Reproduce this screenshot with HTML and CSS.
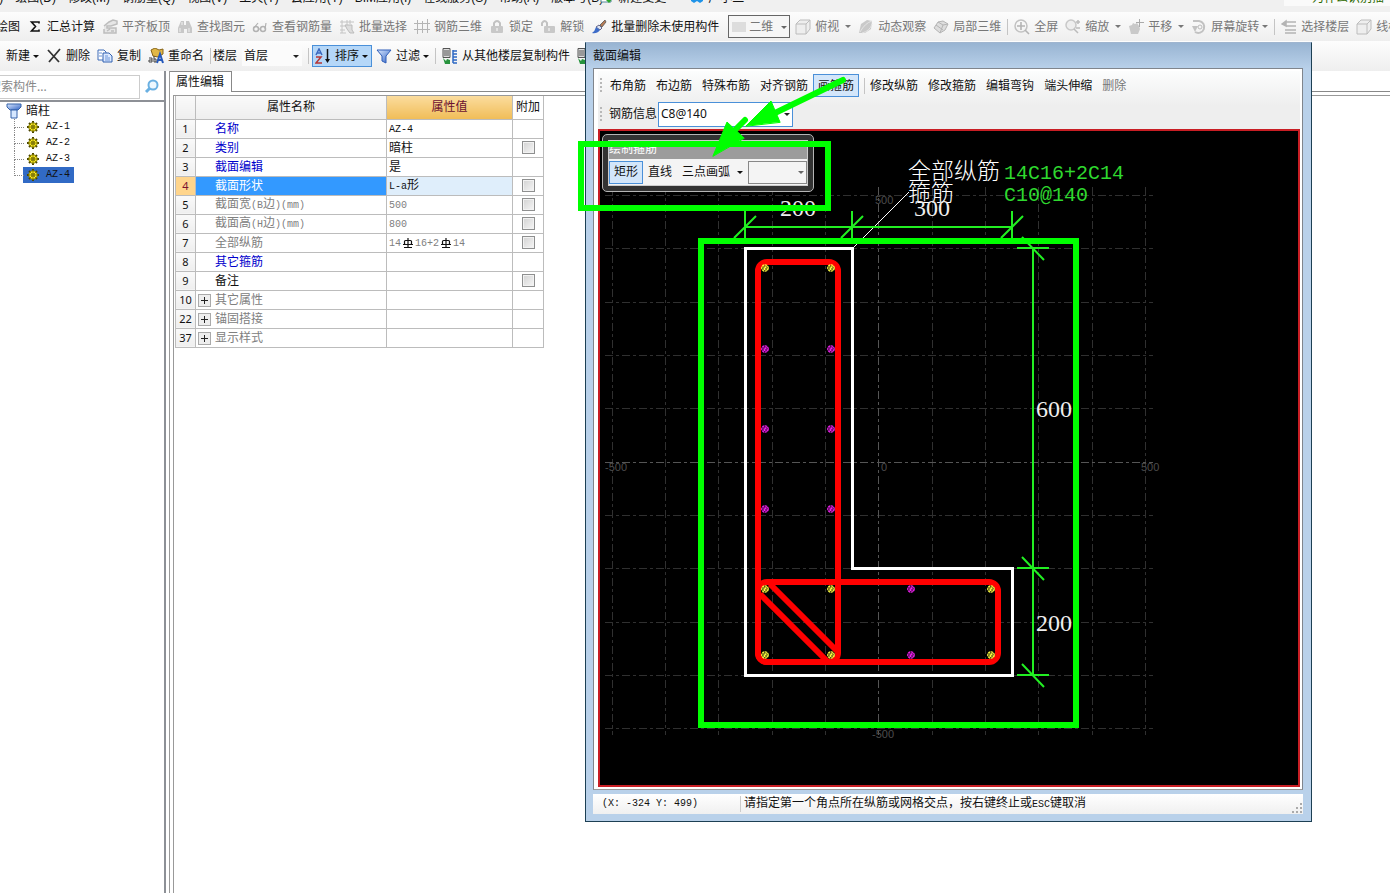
FILE: index.html
```html
<!DOCTYPE html>
<html lang="zh-CN">
<head>
<meta charset="utf-8">
<title>截面编辑</title>
<link rel="stylesheet" href="styles.css">
</head>
<body>
<svg class="defs" aria-hidden="true">
  <defs>
    <linearGradient id="blueFill" x1="0" y1="0" x2="1" y2="1"><stop offset="0" stop-color="#dbe9ff"/><stop offset="1" stop-color="#2f62c4"/></linearGradient>
    <symbol id="i-sigma" viewBox="0 0 16 16"><path d="M12 4.500V3H4.500l4 4.500-4 4.500H12v-1.500" fill="none" stroke="#111" stroke-width="1.600"/></symbol>
    <symbol id="i-align" viewBox="0 0 16 16"><path d="M2 7l5-4 4-2 4 1v3l-6 2H5v2h9v5H2v-4M5 12l3-2M9 12h3" fill="#e6e6e6" stroke="#bdbdbd" stroke-width="1.500"/></symbol>
    <symbol id="i-find" viewBox="0 0 16 16"><path d="M4 2h3v4h2V2h3l3 7v5h-5v-4H7v4H1V9z" fill="#c8c8c8"/><path d="M3 9v4M12 9v4M5 3v3" stroke="#f2f2f2"/></symbol>
    <symbol id="i-glasses" viewBox="0 0 16 16"><circle cx="4" cy="10" r="2.500" fill="none" stroke="#b2b2b2" stroke-width="1.500"/><circle cx="11" cy="10" r="2.500" fill="none" stroke="#b2b2b2" stroke-width="1.500"/><path d="M2 9l4-5M13 10l1-6M6 10h3" fill="none" stroke="#b2b2b2" stroke-width="1.200"/></symbol>
    <symbol id="i-batch" viewBox="0 0 16 16"><path d="M1 3h14M1 7h7M1 11h5M1 14h6M3 1v13M8 1v5M11 1v4" stroke="#c4c4c4" fill="none"/><path d="M6 6h7v5l2 3h-4l-3-4z" fill="#ddd" stroke="#bbb"/></symbol>
    <symbol id="i-rebar" viewBox="0 0 16 16"><path d="M0 4.500h16M0 10.500h16M3.500 1v14M8.500 2v12M13.500 0v14" stroke="#b4b4b4" fill="none"/></symbol>
    <symbol id="i-lock" viewBox="0 0 16 16"><path d="M5 7V4q3-4 6 0v3" fill="none" stroke="#c2c2c2" stroke-width="2"/><rect x="2" y="7" width="12" height="7" rx="1" fill="#c8c8c8"/><path d="M8 9v3" stroke="#fff"/></symbol>
    <symbol id="i-unlock" viewBox="0 0 16 16"><path d="M2 7V4q3-4 5 0v3" fill="none" stroke="#c2c2c2" stroke-width="2"/><rect x="4" y="7" width="11" height="7" rx="1" fill="#c8c8c8"/><path d="M9 9v3" stroke="#fff"/></symbol>
    <symbol id="i-brush" viewBox="0 0 16 16"><path d="M9 6l5-5 1 2-4 5z" fill="#b77b55" stroke="#555" stroke-width=".8"/><path d="M8 6l3 3-2 2-4-3z" fill="#dce5f4" stroke="#668"/><path d="M5 8l4 3q-3 4-8 3 3-2 4-6z" fill="#3d6cc8"/></symbol>
    <symbol id="i-cube" viewBox="0 0 16 16"><path d="M1 5l4-4h10v9l-4 5H1z" fill="#eee" stroke="#bcbcbc"/><path d="M1 5h10v10M11 5l4-4" fill="none" stroke="#bcbcbc"/></symbol>
    <symbol id="i-orbit" viewBox="0 0 16 16"><path d="M1 14L3 5l6-4 5 1-1 8-6 4z" fill="#c9c9c9"/><path d="M2 13Q7 4 14 2M4 14q8-2 10-9" fill="none" stroke="#e4e4e4"/></symbol>
    <symbol id="i-local" viewBox="0 0 16 16"><path d="M1 9l4-6 5-1 5 3-3 6-5 3z" fill="#ddd" stroke="#b4b4b4"/><path d="M5 3l5 3 5-1M10 6l-3 8M3 6l7 5" fill="none" stroke="#b4b4b4"/></symbol>
    <symbol id="i-full" viewBox="0 0 16 16"><circle cx="7" cy="7" r="6" fill="none" stroke="#c2c2c2" stroke-width="1.500"/><path d="M3 7h8M7 3v8M11 11l4 4" stroke="#b4b4b4" stroke-width="1.600"/></symbol>
    <symbol id="i-zoom" viewBox="0 0 16 16"><circle cx="6" cy="6" r="5" fill="#eee" stroke="#c8c8c8" stroke-width="1.500"/><path d="M9 10l4 4M13 1v4M11 3h4M11 9h4" stroke="#bbb" stroke-width="1.500"/></symbol>
    <symbol id="i-pan" viewBox="0 0 16 16"><path d="M1 7l3-1 1-2 2 1 2-1 2 3 1 3-2 5H3z" fill="#c9c9c9"/><path d="M11.500 0v8M8 3.500h8" stroke="#aaa"/></symbol>
    <symbol id="i-rotate" viewBox="0 0 16 16"><path d="M2 2h6a6 6 0 1 1-4 11" fill="none" stroke="#c2c2c2" stroke-width="2"/><path d="M1 7h6l-3 6z" fill="#c2c2c2"/><circle cx="9" cy="8" r="2" fill="none" stroke="#bbb"/></symbol>
    <symbol id="i-floors" viewBox="0 0 16 16"><path d="M4 3h11M4 7h11M4 11h11M4 14h11M1 5l4-3v5z" stroke="#b4b4b4" stroke-width="1.500" fill="#b4b4b4"/></symbol>
    <symbol id="i-x" viewBox="0 0 16 16"><path d="M2 2l11 12M14 1L3 14" stroke="#333" stroke-width="1.800" fill="none"/></symbol>
    <symbol id="i-copy" viewBox="0 0 16 16"><path d="M1 2h6l2 2v8H1z" fill="#fff" stroke="#3e6cb8"/><path d="M6 5h6l3 3v6H6z" fill="#dce9ff" stroke="#3160b0"/><path d="M2 5h3M2 8h3M8 8h3M8 10h5M8 12h5" stroke="#6b94d8"/></symbol>
    <symbol id="i-rename" viewBox="0 0 16 16"><path d="M3 2l4-2 4 2 4-1v5l-5 3-5-1z" fill="#e1b746" stroke="#876418"/><path d="M9 15l3-9 3 9M10 12h4" fill="none" stroke="#2458bb" stroke-width="2"/><path d="M1 10h3v4H1v-2h3M6 8v6h2v-3H6" fill="none" stroke="#444"/></symbol>
    <symbol id="i-sort" viewBox="0 0 16 16"><path d="M1 7l3-6 3 6M2 5h4" fill="none" stroke="#3a68bd" stroke-width="1.500"/><path d="M1 9h5l-5 6h6" fill="none" stroke="#b53636" stroke-width="1.500"/><path d="M12.500 1v12" stroke="#111" stroke-width="1.500"/><path d="M10 11h5l-2.500 4z" fill="#111"/></symbol>
    <symbol id="i-filter" viewBox="0 0 16 16"><path d="M1 2h14L10 8v7l-4-2V8z" fill="url(#blueFill)" stroke="#2e5db8"/></symbol>
    <symbol id="i-floorcopy" viewBox="0 0 16 16"><path d="M1 .5h7v9H1z" fill="#ddd" stroke="#555"/><path d="M2 3h5M2 5h5M2 7h5" stroke="#555"/><path d="M11 2v13M11 3h4M11 6h4M11 9h4M11 12h4M11 15h4" stroke="#2d68c4" stroke-width="1.500"/><path d="M1 10l3 3 1-2 3 1v4H3z" fill="#27933d"/></symbol>
    <symbol id="i-search" viewBox="0 0 16 16"><circle cx="9" cy="6" r="4.500" fill="#edf8ff" stroke="#6ab0e2" stroke-width="2"/><path d="M6 9l-4 4" stroke="#6ab0e2" stroke-width="3"/></symbol>
    <symbol id="i-column" viewBox="0 0 16 16"><path d="M1 1h14v3l-3 3H4L1 4z" fill="url(#blueFill)" stroke="#3563aa"/><path d="M5 7h6v8H5z" fill="#d7e8ff" stroke="#3563aa"/></symbol>
    <symbol id="i-gear" viewBox="0 0 12 12"><path d="M6 0v12M0 6h12M2 2l8 8M10 2l-8 8" stroke="#4b4500" stroke-width="2"/><circle cx="6" cy="6" r="4.200" fill="#ffee22" stroke="#7b7300"/><path d="M6 2v8M2 6h8M3 3l6 6M9 3L3 9" stroke="#777000" stroke-width=".8"/><circle cx="6" cy="6" r="1.200" fill="#ffee22" stroke="#4b4500"/></symbol>
    <symbol id="i-rebarC" viewBox="0 0 12 12"><path d="M6 1v10M2 10.500h8M1 7.500h10" stroke="#111" stroke-width="1.200"/><rect x="2.500" y="3.500" width="7" height="4" rx="1" fill="none" stroke="#111" stroke-width="1.200"/></symbol>
    <g id="bar" fill="none" stroke="currentColor"><circle r="3.200" stroke-width="1.300" stroke-dasharray="2.400 .5"/><path d="M-2-1h2v3M1 1h2M-1 2v-2M1-2v2" stroke-width="1.200"/></g>
    <g id="tickV"><path d="M0-16V13M-11 11L11-11"/></g>
    <g id="tickH"><path d="M-16 0H16M-11-11L11 12"/></g>
  </defs>
</svg>

<div class="app">
  <nav class="menubar">
    <span class="menus"><button>(F)</button><button>绘图(D)</button><button>修改(M)</button><button>钢筋量(Q)</button><button>视图(V)</button><button>工具(T)</button><button>云应用(Y)</button><button>BIM应用(I)</button><button>在线服务(S)</button><button>帮助(A)</button><button>版本号(B)</button></span>
    <button class="iconed"><svg width="14" height="14" viewBox="0 0 14 14"><path d="M1 1h10v11H1z" fill="#fff" stroke="#589"/><path d="M5 9l4 4 4-5-3-2z" fill="#2ba52b"/></svg>新建变更</button>
    <button class="iconed user"><svg width="14" height="14" viewBox="0 0 14 14"><path d="M1 3h12v8l-3 2-3-2-3 2-3-2z" fill="#1e93e8"/></svg>广小二</button>
    <span class="notice">为什么识别插</span>
  </nav>

  <div class="toolbar main-tools">
    <button>绘图</button>
    <button><svg><use href="#i-sigma"/></svg>汇总计算</button>
    <button disabled><svg><use href="#i-align"/></svg>平齐板顶</button>
    <button disabled><svg><use href="#i-find"/></svg>查找图元</button>
    <button disabled><svg><use href="#i-glasses"/></svg>查看钢筋量</button>
    <button disabled><svg><use href="#i-batch"/></svg>批量选择</button>
    <button disabled><svg><use href="#i-rebar"/></svg>钢筋三维</button>
    <button disabled><svg><use href="#i-lock"/></svg>锁定</button>
    <button disabled><svg><use href="#i-unlock"/></svg>解锁</button>
    <button><svg><use href="#i-brush"/></svg>批量删除未使用构件</button>
    <span class="pick view-pick"><select aria-label="视图" disabled><option>二维</option></select></span>
    <button disabled><svg><use href="#i-cube"/></svg>俯视<i class="caret"></i></button>
    <button disabled><svg><use href="#i-orbit"/></svg>动态观察</button>
    <button disabled><svg><use href="#i-local"/></svg>局部三维</button>
    <i class="sep"></i>
    <button disabled><svg><use href="#i-full"/></svg>全屏</button>
    <button disabled><svg><use href="#i-zoom"/></svg>缩放<i class="caret"></i></button>
    <button disabled><svg><use href="#i-pan"/></svg>平移<i class="caret"></i></button>
    <button disabled><svg><use href="#i-rotate"/></svg>屏幕旋转<i class="caret tight"></i></button>
    <i class="sep"></i>
    <button disabled><svg><use href="#i-floors"/></svg>选择楼层</button>
    <button disabled><svg><use href="#i-cube"/></svg>线框</button>
  </div>

  <div class="toolbar edit-tools">
    <button>新建<i class="caret tight"></i></button>
    <button><svg><use href="#i-x"/></svg>删除</button>
    <button><svg><use href="#i-copy"/></svg>复制</button>
    <button><svg><use href="#i-rename"/></svg>重命名</button>
    <i class="sep"></i>
    <label for="floor">楼层</label>
    <span class="pick floor-pick"><select id="floor"><option>首层</option></select></span>
    <i class="sep"></i>
    <button class="on"><svg><use href="#i-sort"/></svg>排序<i class="caret tight"></i></button>
    <button><svg><use href="#i-filter"/></svg>过滤<i class="caret tight"></i></button>
    <i class="sep"></i>
    <button><svg><use href="#i-floorcopy"/></svg>从其他楼层复制构件</button>
    <button aria-label="复制到其他楼层"><svg><use href="#i-floorcopy"/></svg></button>
  </div>

  <div class="work">
    <aside class="side">
      <div class="search">
        <input type="text" aria-label="搜索构件" placeholder="搜索构件...">
        <button aria-label="搜索"><svg width="16" height="16"><use href="#i-search"/></svg></button>
      </div>
      <ul class="tree">
        <li class="root"><svg width="16" height="16"><use href="#i-column"/></svg>暗柱
          <ul>
            <li><span><svg width="12" height="12"><use href="#i-gear"/></svg><b>AZ-1</b></span></li>
            <li><span><svg width="12" height="12"><use href="#i-gear"/></svg><b>AZ-2</b></span></li>
            <li><span><svg width="12" height="12"><use href="#i-gear"/></svg><b>AZ-3</b></span></li>
            <li><span class="chosen"><svg width="12" height="12"><use href="#i-gear"/></svg><b>AZ-4</b></span></li>
          </ul>
        </li>
      </ul>
    </aside>
    <section class="props">
      <div class="tabs"><button class="tab">属性编辑</button></div>
      <div class="sheet">
        <table>
          <colgroup><col class="c-no"><col class="c-name"><col class="c-val"><col class="c-add"></colgroup>
          <thead><tr><th></th><th>属性名称</th><th class="hot">属性值</th><th class="plain">附加</th></tr></thead>
          <tbody>
            <tr><th>1</th><td class="name key">名称</td><td><span class="m">AZ-4</span></td><td></td></tr>
            <tr><th>2</th><td class="name key">类别</td><td>暗柱</td><td class="chk"><input type="checkbox" aria-label="附加 类别"></td></tr>
            <tr><th>3</th><td class="name key">截面编辑</td><td>是</td><td></td></tr>
            <tr class="sel"><th>4</th><td class="name">截面形状</td><td><span class="m">L-a</span>形</td><td class="chk"><input type="checkbox" aria-label="附加 截面形状"></td></tr>
            <tr class="dim"><th>5</th><td class="name">截面宽<span class="m">(B</span>边<span class="m">)(mm)</span></td><td><span class="m">500</span></td><td class="chk"><input type="checkbox" aria-label="附加 截面宽"></td></tr>
            <tr class="dim"><th>6</th><td class="name">截面高<span class="m">(H</span>边<span class="m">)(mm)</span></td><td><span class="m">800</span></td><td class="chk"><input type="checkbox" aria-label="附加 截面高"></td></tr>
            <tr class="dim"><th>7</th><td class="name">全部纵筋</td><td><span class="m">14</span><svg class="steel"><use href="#i-rebarC"/></svg><span class="m">16+2</span><svg class="steel"><use href="#i-rebarC"/></svg><span class="m">14</span></td><td class="chk"><input type="checkbox" aria-label="附加 全部纵筋"></td></tr>
            <tr><th>8</th><td class="name key">其它箍筋</td><td></td><td></td></tr>
            <tr><th>9</th><td class="name">备注</td><td></td><td class="chk"><input type="checkbox" aria-label="附加 备注"></td></tr>
            <tr class="dim"><th>10</th><td class="group"><button aria-label="展开 其它属性"></button>其它属性</td><td></td><td></td></tr>
            <tr class="dim"><th>22</th><td class="group"><button aria-label="展开 锚固搭接"></button>锚固搭接</td><td></td><td></td></tr>
            <tr class="dim"><th>37</th><td class="group"><button aria-label="展开 显示样式"></button>显示样式</td><td></td><td></td></tr>
          </tbody>
        </table>
      </div>
    </section>
  </div>
</div>

<section class="window">
  <h1>截面编辑</h1>
  <div class="frame">
    <div class="wtools">
      <div class="row">
        <i class="grip"></i>
        <button>布角筋</button><button>布边筋</button><button>特殊布筋</button><button>对齐钢筋</button><button class="on">画箍筋</button>
        <i class="sep"></i>
        <button>修改纵筋</button><button>修改箍筋</button><button>编辑弯钩</button><button>端头伸缩</button><button disabled>删除</button>
      </div>
      <div class="row">
        <i class="grip"></i>
        <label for="rebar">钢筋信息</label>
        <span class="pick rebar-pick"><select id="rebar"><option>C8@140</option></select></span>
      </div>
    </div>
    <div class="canvas">
      <svg class="drawing" viewBox="600 131 698 654" preserveAspectRatio="xMinYMin meet">
        <g class="grid">
          <path d="M612.500 187V735M665.500 187V735M718.500 187V735M772.500 187V735M825.500 187V735M932.500 187V735M985.500 187V735M1038.500 187V735M1092.500 187V735M1145.500 187V735"/>
          <path d="M605 195.500H1153M605 248.500H1153M605 302.500H1153M605 355.500H1153M605 408.500H1153M605 515.500H1153M605 568.500H1153M605 622.500H1153M605 675.500H1153M605 728.500H1153"/>
          <path class="axis" d="M878.500 187V735M605 462.500H1153"/>
        </g>
        <g class="ticks"><text x="605" y="471">-500</text><text x="881" y="471">0</text><text x="1141" y="471">500</text><text x="875" y="204">500</text><text x="872" y="738">-500</text></g>
        <path d="M852 249L909 192" stroke="#fff"/>
        <path d="M745.500 248.500H852.500V568.500H1012.500V675.500H745.500Z" fill="none" stroke="#fff" stroke-width="3"/>
        <g class="dims">
          <path d="M745 227H1012M1033 248V675"/>
          <use href="#tickV" x="745" y="227"/><use href="#tickV" x="852" y="227"/><use href="#tickV" x="1012" y="227"/>
          <use href="#tickH" x="1033" y="248"/><use href="#tickH" x="1033" y="568"/><use href="#tickH" x="1033" y="675"/>
        </g>
        <g class="stirrup">
          <rect x="758" y="262" width="80" height="400" rx="9"/>
          <rect x="758" y="582" width="240" height="80" rx="9"/>
          <path d="M770 584L838 652M760 594L827 661"/>
        </g>
        <g color="#ffff40"><use href="#bar" x="765" y="268"/><use href="#bar" x="831" y="268"/><use href="#bar" x="765" y="589"/><use href="#bar" x="831" y="589"/><use href="#bar" x="991" y="589"/><use href="#bar" x="765" y="655"/><use href="#bar" x="831" y="655"/><use href="#bar" x="991" y="655"/></g>
        <g color="#f020f0"><use href="#bar" x="765" y="349"/><use href="#bar" x="831" y="349"/><use href="#bar" x="765" y="429"/><use href="#bar" x="831" y="429"/><use href="#bar" x="765" y="509"/><use href="#bar" x="831" y="509"/><use href="#bar" x="911" y="589"/><use href="#bar" x="911" y="655"/></g>
        <g class="labels">
          <text x="908" y="179">全部纵筋</text><text x="908" y="201">箍筋</text>
          <text class="num" x="780" y="216">200</text><text class="num" x="914" y="216">300</text>
          <text class="num" x="1036" y="417">600</text><text class="num" x="1036" y="631">200</text>
          <text class="spec" x="1004" y="179">14C16+2C14</text><text class="spec" x="1004" y="201">C10@140</text>
        </g>
      </svg>
      <div class="palette">
        <div class="inner">
          <h2>绘制箍筋</h2>
          <div class="shapes"><button class="on">矩形</button><button>直线</button><button>三点画弧<i class="caret"></i></button><span class="pick shape-pick"><select aria-label="画法" disabled><option></option></select></span></div>
        </div>
      </div>
    </div>
  </div>
  <footer><span class="m pos">(X: -324 Y: 499)</span><span class="hint">请指定第一个角点所在纵筋或网格交点，按右键终止或<span class="m">ESC</span>键取消</span><svg class="size" width="12" height="12"><path d="M10 1v2M10 5v2M10 9v2M6 5v2M6 9v2M2 9v2" stroke="#aaa" stroke-width="2"/></svg></footer>
</section>

<svg class="marks" aria-hidden="true">
  <rect x="581" y="144" width="247" height="64"/>
  <rect x="701" y="241" width="375" height="484"/>
  <path d="M843 80L775 113M745 120L728 137"/>
  <path class="head" d="M746 126L771 101L780 122ZM713 156L727 122L744 138Z"/>
</svg>
</body>
</html>
```

FILE: styles.css
```css
* { box-sizing: border-box; }

body {
  margin: 0;
  height: 100vh;
  overflow: hidden;
  background: #fff;
  color: #111;
  font: 12px/16px "Noto Sans", "Noto Sans CJK SC", sans-serif;
}

button, select, input {
  font: inherit;
  color: inherit;
  margin: 0;
  padding: 0;
  border: 0;
  background: none;
}

button { white-space: nowrap; }

h1, h2, ul { margin: 0; padding: 0; font-size: 12px; font-weight: 400; }

.defs { position: absolute; width: 0; height: 0; }

.m { font-family: "Liberation Mono", monospace; font-size: 10px; }

.app { display: flex; flex-direction: column; height: 100%; }

/* Menu bar, scrolled partly above the top edge */
.menubar {
  display: flex;
  flex: none;
  height: 22px;
  margin-top: -10px;
  background: #f0f0f0;
}
.menus { display: flex; gap: 12px; margin-left: -12px; }
.menus button, .iconed { height: 16px; }
.menus button { font-family: "Liberation Sans", "Noto Sans CJK SC", sans-serif; }
.iconed { display: flex; gap: 4px; margin-left: 8px; }
.iconed + .user { margin-left: 24px; }
.menus + .iconed { margin-left: -3px; }
.notice {
  margin-left: auto;
  width: 106px;
  padding-left: 28px;
  height: 16px;
  background: #fafafa;
  color: #2c6a00;
  white-space: nowrap;
}

/* Toolbars */
.toolbar {
  display: flex;
  flex: none;
  align-items: center;
  gap: 7px;
  height: 29px;
  overflow: hidden;
  background: linear-gradient(#fdfdfd, #eeeeee);
}
.toolbar > * { flex: none; }
.toolbar button { display: flex; align-items: center; gap: 4px; height: 22px; }
.toolbar svg { width: 16px; height: 16px; }
.toolbar button:disabled { color: #777; }
.main-tools > :first-child { margin-left: -4px; }
.edit-tools { height: 30px; padding-left: 6px; }
.caret {
  width: 6px;
  margin: 0 0 0 2px;
  border: 3px solid transparent;
  border-top-color: currentColor;
  border-bottom: 0;
}
.caret.tight { margin-left: -1px; }
.sep { width: 1px; height: 16px; background: #c4c4c4; }
.toolbar .sep { margin: 0 -1px; }
.on { border: 1px solid #4a90d9; background: #d3e6fa; }
.toolbar .on { padding: 0 3px 0 2px; margin: 0 -3px; background: #b5d7f8; }
.edit-tools label { margin: 0 -4px; }

.pick { position: relative; display: flex; }
.pick select { width: 100%; appearance: none; opacity: 1; }
.pick::after {
  content: "";
  position: absolute;
  right: 3px;
  top: 50%;
  margin-top: -1px;
  border: 3px solid transparent;
  border-top-color: #222;
  border-bottom: 0;
}
.view-pick { width: 62px; margin-left: 2px; }
.view-pick::after, .shape-pick::after { border-top-color: #666; }
.view-pick select {
  height: 23px;
  padding-left: 20px;
  border: 1px solid #666;
  color: #777;
  background: linear-gradient(#ddd, #ddd) 3px 6px / 14px 10px no-repeat #f6f6f6;
}
.main-tools .view-pick + button { margin-left: -2px; }
.floor-pick { width: 60px; margin: 0 0 0 2px; }
.floor-pick select { height: 20px; padding-left: 2px; background: #fbfbfb; }

/* Work area */
.work { display: flex; flex: 1; min-height: 0; }
.side { width: 166px; flex: none; border-right: 2px solid #8d9096; }
.search {
  display: flex;
  align-items: center;
  height: 31px;
  padding-top: 2px;
  border-bottom: 2px solid #8d9096;
  overflow: hidden;
}
.search input {
  width: 152px;
  height: 24px;
  flex: none;
  margin-left: -12px;
  border: 1px solid #ccc;
}
.search input::placeholder { color: #888; }
.search button { display: flex; margin-left: 4px; }

.tree, .tree ul { list-style: none; }
.root { padding: 1px 0 0 26px; position: relative; }
.root > svg { position: absolute; left: 6px; top: 1px; }
.root ul { margin-left: -11px; }
.root li { position: relative; height: 16px; padding-left: 8px; }
.root li::before {
  content: "";
  position: absolute;
  left: -1px;
  top: 0;
  width: 9px;
  height: 8px;
  border: dotted #888;
  border-width: 0 0 1px 1px;
}
.root li:not(:last-child)::after {
  content: "";
  position: absolute;
  left: -1px;
  top: 8px;
  height: 8px;
  border-left: 1px dotted #888;
}
.root li span { display: inline-flex; align-items: center; gap: 7px; height: 16px; padding: 0 4px; }
.root b { font: 10px/16px "Liberation Mono", monospace; }
.chosen { background: #316ac5; }

.props { flex: 1; min-width: 0; margin-left: 3px; border-left: 1px solid #999; }
.tabs { display: flex; height: 21px; border-bottom: 1px solid #888; }
.tab { height: 21px; padding: 0 7px 0 6px; border: solid #888; border-width: 1px 1px 0 0; background: #fff; }
.sheet { height: 100%; margin: 3px 0 0 3px; border: solid #999; border-width: 1px 0 0 1px; padding-left: 1px; }

table { border-collapse: collapse; table-layout: fixed; width: 368px; }
.c-no { width: 20px; }
.c-name { width: 191px; }
.c-val { width: 126px; }
.c-add { width: 31px; }
th, td { height: 19px; padding: 0 2px; border: 1px solid #bcbcbc; line-height: 16px; text-align: left; white-space: nowrap; }
th { padding: 0; text-align: center; font-weight: 400; background: linear-gradient(#fafafa, #eee); }
tbody th { font-size: 11px; }
thead th { height: 23px; border-top: 0; }
thead .hot { background: linear-gradient(#fbdc9d, #f0bd58); color: #6b1030; }
thead .plain { background: #fff; }
.name { padding-left: 19px; }
.key { color: #00c; }
.dim td { color: #808080; }
.sel th { background: #ffd58c; color: #7a1230; }
.sel .name { background: #3399ff; color: #fff; }
.sel td { background: #dfeefb; }
.sel .chk { background: #fff; }
.chk { text-align: center; }
.chk input {
  display: block;
  appearance: none;
  width: 13px;
  height: 13px;
  margin: 0 auto;
  border: 1px solid #8e8f8f;
  background: linear-gradient(135deg, #d2d2d2, #f6f6f6);
  box-shadow: inset 0 0 0 1px #f2f2f2;
}
.steel { width: 12px; height: 12px; margin: 0 1px; vertical-align: -3px; }
.group button {
  width: 13px;
  height: 13px;
  margin-right: 4px;
  vertical-align: -2px;
  border: 1px solid #aaa;
  background:
    linear-gradient(#222, #222) center / 7px 1px no-repeat,
    linear-gradient(#222, #222) center / 1px 7px no-repeat,
    #eee;
}

/* Section editor window */
.window {
  position: absolute;
  left: 585px;
  top: 42px;
  width: 727px;
  padding: 0 8px 0 7px;
  border: 1px solid #1d4054;
  border-top-color: #9fb5cf;
  background: linear-gradient(#98b4d2, #b9d1ea 26px);
}
.window h1 { height: 25px; padding-top: 5px; }
.frame { border: 1px solid #80858c; border-bottom-color: #999; background: #fff; padding: 2px 2px 2px 4px; }
.wtools { height: 58px; background: linear-gradient(#fcfdfd, #eee 60%); }
.row { display: flex; align-items: center; height: 29px; padding-left: 2px; }
.row + .row { height: 28px; }
.wtools .row button { height: 23px; padding: 0 5px; }
.wtools .row .on { padding: 0 4px; }
.wtools .sep { margin: 0 0 0 5px; }
.grip { width: 2px; height: 15px; margin-right: 3px; background: repeating-linear-gradient(#b8b8b8 0 2px, transparent 2px 4px); }
.wtools label { margin-left: 4px; }
.row button:disabled { color: #777; }
.rebar-pick { width: 135px; margin-left: 1px; }
.rebar-pick select { height: 25px; padding-left: 2px; border: 1px solid #4a90d9; background: #fff; }

.canvas { position: relative; border: 2px solid #c81e24; background: #000; }
.drawing { display: block; width: 100%; height: 654px; }
.grid path { fill: none; stroke: #303030; stroke-dasharray: 8 3 3 3; }
.grid .axis { stroke: #555; }
.ticks text { fill: #4c4c4c; font: 11px "Liberation Sans", sans-serif; }
.dims { fill: none; stroke: #22ef22; stroke-width: 2; }
.stirrup { fill: none; stroke: #f00; stroke-width: 6; }
.labels text { fill: #fff; font: 300 23px "Noto Sans CJK SC", sans-serif; }
.labels .num { fill: #eee; font: 24px "Liberation Serif", serif; }
.labels .spec { fill: #2fd92f; font: 20px "Liberation Mono", monospace; }

.palette {
  position: absolute;
  left: 2px;
  top: 3px;
  width: 212px;
  padding: 5px;
  border: 1px solid #b5b5b5;
  border-radius: 5px;
  background: #333;
}
.inner { border: 1px solid #ccc; background: #f4f4f4; }
.palette h2 { height: 18px; background: #9c9c9c; color: #fff; }
.shapes { display: flex; align-items: center; height: 26px; }
.shapes button { display: flex; align-items: center; height: 23px; padding: 0 5px; }
.shapes .on { padding: 0 4px; }
.shapes .caret { margin-left: 7px; }
.shape-pick { flex: 1; }
.shape-pick select { height: 23px; border: 1px solid #888; background: #f4f4f4; }

.window footer {
  display: flex;
  align-items: center;
  height: 20px;
  margin: 4px 0 7px;
  background: linear-gradient(#fff, #f0f0f0);
}
.pos { width: 148px; padding-left: 9px; border-right: 1px solid #ccc; white-space: pre; }
.hint { flex: 1; padding-left: 3px; }
.size { align-self: flex-end; }

/* Highlight marks drawn over everything */
.marks { position: absolute; left: 0; top: 0; width: 100%; height: 100%; pointer-events: none; fill: none; stroke: #0f0; stroke-width: 6; }
.marks path { stroke-linecap: round; }
.marks .head { fill: #0f0; stroke-width: 1; }
```
